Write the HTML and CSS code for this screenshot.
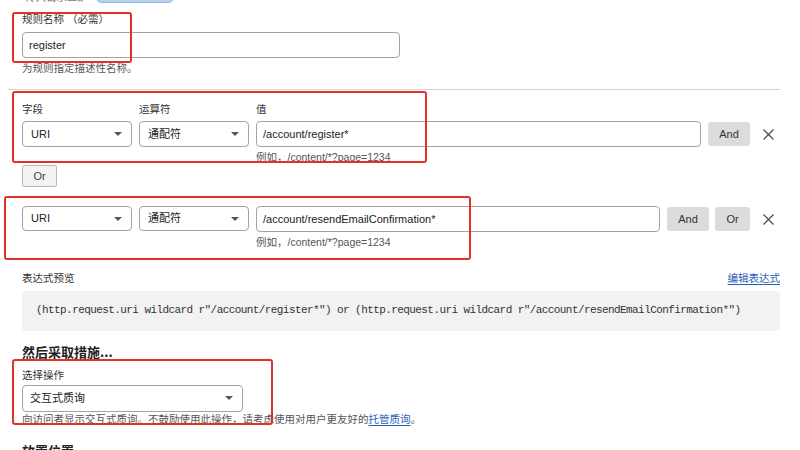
FILE: index.html
```html
<!DOCTYPE html>
<html>
<head>
    <meta charset="utf-8">
    <title>规则</title>
    <link rel="stylesheet" href="styles.css">
</head>
<body>
    <div class="page">
        <div class="cut-top">
            <span class="cut-text">传入请求匹配</span>
            <span class="cut-pill"></span>
        </div>

        <div class="field-block">
            <p class="label">规则名称 （必需）</p>
            <input class="text-input name-input" type="text" value="register">
            <p class="hint">为规则指定描述性名称。</p>
        </div>

        <div class="separator"></div>

        <div class="cond-labels">
            <span class="col-sel">字段</span>
            <span class="col-sel">运算符</span>
            <span>值</span>
        </div>
        <div class="cond-row">
            <div class="select col-sel">URI<span class="caret"></span></div>
            <div class="select col-sel">通配符<span class="caret"></span></div>
            <div class="value-col">
                <input class="text-input" type="text" value="/account/register*">
                <p class="hint">例如，/content/*?page=1234</p>
            </div>
            <button class="op-btn and-btn">And</button>
            <span class="remove">
                <svg width="11" height="11" viewBox="0 0 11 11"><path d="M0.5 0.5 L10.5 10.5 M10.5 0.5 L0.5 10.5" stroke="#444" stroke-width="1.1" fill="none"/></svg>
            </span>
        </div>
        <button class="or-outline">Or</button>

        <div class="cond-row row-two">
            <div class="select col-sel">URI<span class="caret"></span></div>
            <div class="select col-sel">通配符<span class="caret"></span></div>
            <div class="value-col">
                <input class="text-input" type="text" value="/account/resendEmailConfirmation*">
                <p class="hint">例如，/content/*?page=1234</p>
            </div>
            <button class="op-btn and-btn">And</button>
            <button class="op-btn or-btn">Or</button>
            <span class="remove">
                <svg width="11" height="11" viewBox="0 0 11 11"><path d="M0.5 0.5 L10.5 10.5 M10.5 0.5 L0.5 10.5" stroke="#444" stroke-width="1.1" fill="none"/></svg>
            </span>
        </div>

        <div class="preview-head">
            <span class="label">表达式预览</span>
            <a class="link" href="#">编辑表达式</a>
        </div>
        <div class="code-box">(http.request.uri wildcard r"/account/register*") or (http.request.uri wildcard r"/account/resendEmailConfirmation*")</div>

        <h3 class="section-title">然后采取措施...</h3>
        <p class="label">选择操作</p>
        <div class="select action-select">交互式质询<span class="caret"></span></div>
        <p class="hint">向访问者显示交互式质询。不鼓励使用此操作，请考虑使用对用户更友好的<a class="link" href="#">托管质询</a>。</p>

        <h3 class="section-title cut-bottom">放置位置</h3>

        <!-- annotation boxes -->
        <div class="mark mark-name"></div>
        <div class="mark mark-row1"></div>
        <div class="mark mark-row2"></div>
        <div class="mark mark-action"></div>
    </div>
</body>
</html>
```

FILE: styles.css
```css
* {
    box-sizing: border-box;
}

body {
    margin: 0;
    background: #ffffff;
    color: #333333;
    font-family: "Liberation Sans", "Noto Sans CJK SC", sans-serif;
    overflow: hidden;
}

.page {
    position: relative;
    width: 800px;
    height: 450px;
    padding: 0 20px 0 22px;
    overflow: hidden;
}

p {
    margin: 0;
}

.cut-top {
    display: flex;
    align-items: center;
    gap: 12px;
    height: 14px;
    margin-top: -11px;
    margin-left: 3px;
}

.cut-text {
    font-size: 10.5px;
    color: #777;
    width: 58px;
    white-space: nowrap;
    overflow: hidden;
}

.cut-pill {
    width: 80px;
    height: 14px;
    border-radius: 7px;
    background: #b9d3ee;
    border: 1px solid #8fb4dc;
}

.label {
    font-size: 10.5px;
    line-height: 14px;
    color: #333;
}

.hint {
    font-size: 10.5px;
    line-height: 14px;
    color: #555;
}

.field-block {
    padding-top: 9px;
}

.field-block .label {
    margin-bottom: 6px;
}

.text-input {
    display: block;
    width: 100%;
    height: 26px;
    border: 1px solid #a3a3a3;
    border-radius: 4px;
    padding: 0 6px;
    font-family: "Liberation Sans", "Noto Sans CJK SC", sans-serif;
    font-size: 11px;
    color: #222;
    background: #fff;
}

.name-input {
    width: 378px;
}

.field-block .hint {
    margin-top: 3px;
}

.separator {
    height: 1px;
    background: #d0d0d0;
    margin: 14px 0 0 -14px;
}

.cond-labels {
    display: flex;
    gap: 7px;
    margin-top: 12px;
    font-size: 10.5px;
    line-height: 14px;
}

.col-sel {
    width: 110px;
    flex: none;
}

.cond-row {
    display: flex;
    gap: 7px;
    align-items: flex-start;
    margin-top: 5px;
}

.select {
    position: relative;
    height: 26px;
    border: 1px solid #a3a3a3;
    border-radius: 4px;
    padding: 0 8px;
    font-size: 11px;
    line-height: 24px;
    color: #222;
}

.caret {
    position: absolute;
    right: 9px;
    top: 10px;
    border-left: 4px solid transparent;
    border-right: 4px solid transparent;
    border-top: 4px solid #555;
}

.value-col {
    flex: 1;
}

.value-col .hint {
    margin-top: 3px;
}

.op-btn {
    flex: none;
    height: 24px;
    margin-top: 1px;
    border: none;
    border-radius: 3px;
    background: #dcdcdc;
    font-family: "Liberation Sans", sans-serif;
    font-size: 11px;
    color: #333;
    padding: 0;
}

.and-btn {
    width: 42px;
}

.or-btn {
    width: 35px;
    margin-left: -1px;
}

.remove {
    width: 23px;
    flex: none;
    display: flex;
    justify-content: flex-start;
    padding-top: 8px;
    padding-left: 6px;
}

.or-outline {
    display: block;
    width: 35px;
    height: 22px;
    margin-top: 1px;
    border: 1px solid #b8b8b8;
    border-radius: 2px;
    background: #f3f3f3;
    font-family: "Liberation Sans", sans-serif;
    font-size: 11px;
    color: #444;
    padding: 0;
}

.row-two {
    margin-top: 19px;
}

.row-two .select {
    height: 25px;
    line-height: 23px;
}

.preview-head {
    display: flex;
    justify-content: space-between;
    align-items: center;
    margin-top: 21px;
}

.link {
    color: #1f62b8;
    font-size: 10.5px;
    text-decoration: underline;
    text-underline-offset: 2px;
}

.code-box {
    margin-top: 6px;
    height: 40px;
    background: #f2f2f2;
    border-radius: 4px;
    padding: 13px 0 0 14px;
    font-family: "Liberation Mono", "Noto Sans CJK SC", monospace;
    font-size: 11px;
    letter-spacing: -0.58px;
    color: #333;
    white-space: nowrap;
}

.section-title {
    margin: 13px 0 0;
    font-size: 13px;
    line-height: 16px;
    font-weight: bold;
    color: #222;
    font-family: "Noto Sans CJK SC", sans-serif;
}

.section-title + .label {
    margin-top: 8px;
}

.action-select {
    width: 221px;
    height: 27px;
    line-height: 25px;
    margin-top: 3px;
    padding-left: 7px;
}

.action-select + .hint {
    margin-top: 0;
}

.cut-bottom {
    margin-top: 17px;
}

.mark {
    position: absolute;
    border: 2px solid #e2312b;
    border-radius: 3px;
}

.mark-name {
    left: 12px;
    top: 12px;
    width: 120px;
    height: 51px;
}

.mark-row1 {
    left: 12px;
    top: 91px;
    width: 415px;
    height: 72px;
}

.mark-row2 {
    left: 4px;
    top: 196px;
    width: 467px;
    height: 64px;
}

.mark-action {
    left: 12px;
    top: 359px;
    width: 261px;
    height: 66px;
}
```
